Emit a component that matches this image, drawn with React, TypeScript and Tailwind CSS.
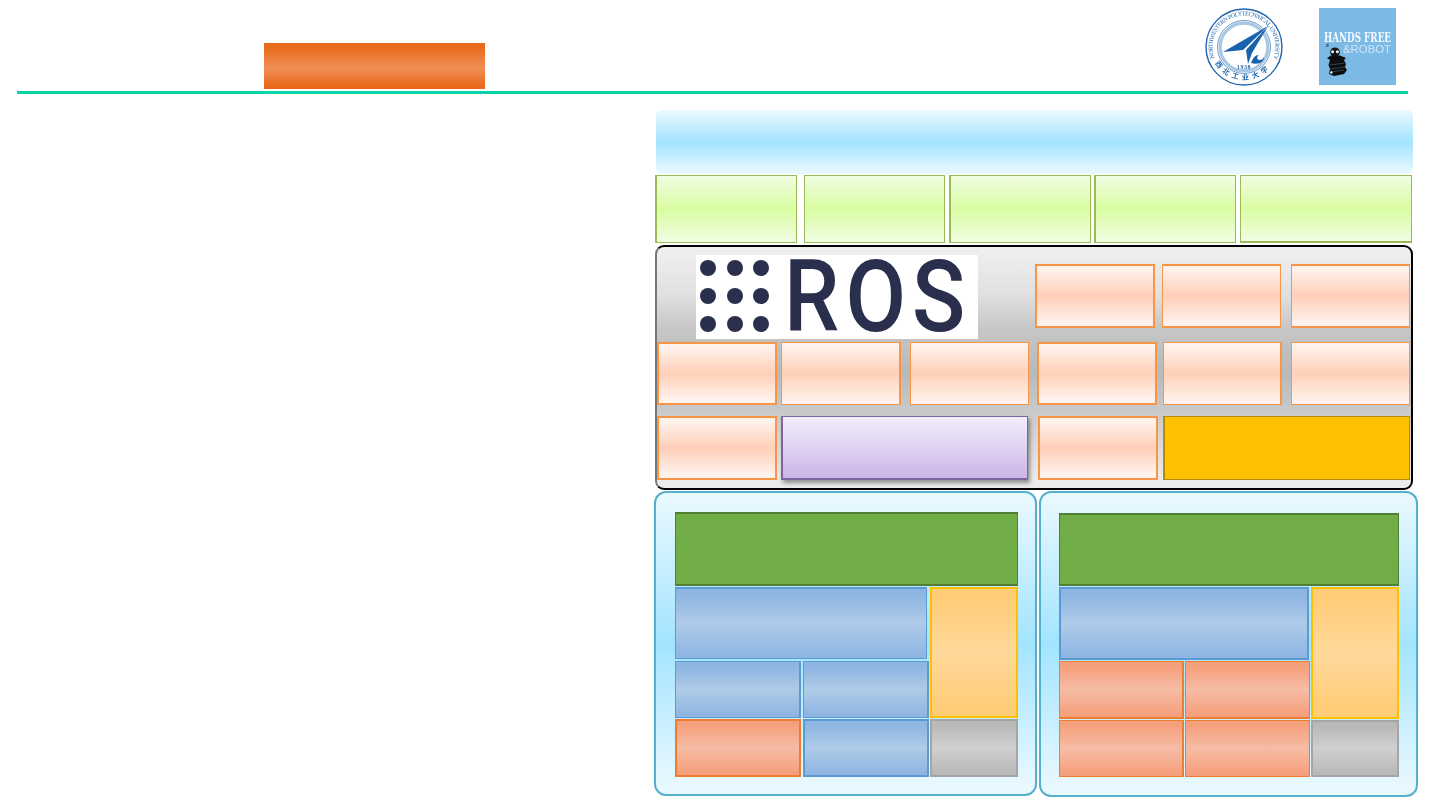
import React from 'react';

const SKY = 'bg-[linear-gradient(180deg,#e8f8ff_2%,#a3e4ff_50%,#e8f8ff_97%)]';
const LIME = 'border-[#9bbb59] bg-[linear-gradient(180deg,#f0fde2_0%,#d9fda2_50%,#f0fde2_100%)]';
const PEACH = 'border-[#f79646] bg-[linear-gradient(180deg,#fff2ec_5%,#ffcfb8_50%,#fff2ec_95%)]';
const BLUE = 'border-[#5b9bd5] bg-[linear-gradient(180deg,#8fb6e2_10%,#b0cbe8_50%,#8fb6e2_95%)]';
const CORAL = 'border-[#ed7d31] bg-[linear-gradient(180deg,#f5a07c_8%,#f6bca5_50%,#f5a07c_95%)]';
const AMBER = 'border-2 border-[#ffc000] bg-[linear-gradient(180deg,#ffcd78_8%,#ffd99b_50%,#ffcd78_92%)]';
const GRAY = 'border-2 border-[#a5a5a5] bg-[linear-gradient(180deg,#b9b9b9_8%,#d0d0d0_50%,#b9b9b9_95%)]';

function Box({ className = '' }: { className?: string }) {
  return <div className={`shrink-0 ${className}`} />;
}

function SchoolSeal() {
  return (
    <svg viewBox="0 0 78 78" className="h-[78px] w-[78px] shrink-0 blur-[0.3px]">
      <defs>
        <path id="sealTop" d="M9.5 50 A31.5 31.5 0 1 1 68.5 50" />
        <path id="sealBottom" d="M6 46 A34 34 0 0 0 72 46" />
      </defs>
      <circle cx="39" cy="39" r="38" fill="#fff" stroke="#1f66ae" strokeWidth="1.4" />
      <circle cx="39" cy="39" r="26.5" fill="#fff" stroke="#2a6fb3" strokeWidth="0.7" />
      <circle cx="39" cy="39" r="23.8" fill="#fff" stroke="#a9c6e2" strokeWidth="3.2" />
      <text fontFamily="'Liberation Serif', serif" fontSize="6" fill="#1f66ae">
        <textPath href="#sealTop" textLength="122">NORTHWESTERN POLYTECHNICAL UNIVERSITY</textPath>
      </text>
      <text fontFamily="'Noto Sans CJK SC', sans-serif" fontSize="7" fontWeight="700" fill="#1f66ae">
        <textPath href="#sealBottom" startOffset="10" textLength="62">西北工业大学</textPath>
      </text>
      <path d="M63 18 L18 44 L38 42 Z" fill="#1a62ab" />
      <path d="M63 18 L41 42 L43 56 L47 45 Z" fill="#1a62ab" />
      <path d="M46 55 C48 50 50 47 54 47 C51 49 52 52 55 52 C57 52 58 51 59 49 C59 54 54 57 46 55 Z" fill="#1a62ab" />
      <text x="39" y="60.5" textAnchor="middle" fontFamily="'Liberation Serif', serif" fontSize="6" fontWeight="700" fill="#1f66ae" letterSpacing="0.6">1938</text>
    </svg>
  );
}

function HandsFreeLogo() {
  return (
    <svg viewBox="0 0 77 77" className="ml-[36px] h-[77px] w-[77px] shrink-0 blur-[0.25px]">
      <rect width="77" height="77" fill="#7db9e5" />
      <text x="5" y="34" textLength="67" lengthAdjust="spacingAndGlyphs" fontFamily="'DejaVu Serif', serif" fontSize="13.5" fontWeight="700" fill="#f4fbff">HANDS FREE</text>
      <text x="24" y="44.5" textLength="48" lengthAdjust="spacingAndGlyphs" fontFamily="'Liberation Sans', sans-serif" fontSize="10.5" fill="#cfe6f5">&amp;ROBOT</text>
      <circle cx="16" cy="44.2" r="4.8" fill="#151515" />
      <circle cx="13.6" cy="43.8" r="1.5" fill="#e8f2f8" />
      <circle cx="18.4" cy="43.8" r="1.5" fill="#e8f2f8" />
      <path d="M8 50 L12 47.5 H21 L27 50 L25 52 H11 Z" fill="#0d0d0d" />
      <path d="M11 52 H25 L27 56 L26 59 L28 62 L25 66 L15 68 L10 66 L11 61 L9.5 57 Z" fill="#0d0d0d" />
      <path d="M11 57 L26 55 M11 61 L26 59 M12 64 L25 62" stroke="#55768f" strokeWidth="0.5" />
      <circle cx="12.3" cy="64.5" r="1.3" fill="#e8f2f8" />
      <path d="M7 37 l2.5 -1 l-2 2.5 l2.5 -0.5" stroke="#28405a" strokeWidth="0.7" fill="none" />
    </svg>
  );
}

function RosLogo() {
  return (
    <div className="ml-[39px] flex h-[84px] w-[282px] shrink-0 items-center bg-white">
      <div className="ml-[4px] grid -translate-y-px grid-cols-[repeat(3,16px)] grid-rows-[repeat(3,16px)] gap-x-[10.5px] gap-y-[11.7px]">
        {Array.from({ length: 9 }).map((_, i) => (
          <span key={i} className="rounded-full bg-[#2b2f4e]" />
        ))}
      </div>
      <span className="ml-[15px] origin-left scale-x-[0.87] font-['Roboto'] text-[101px] leading-[84px] font-medium tracking-[7px] text-[#2b2f4e]">
        ROS
      </span>
    </div>
  );
}

export default function App() {
  return (
    <div className="h-[810px] w-[1440px] overflow-hidden bg-white">
      <header className="ml-[17px] flex h-[94px] w-[1391px] items-start border-b-[3px] border-[#0ad3a5]">
        <Box className="mt-[43px] ml-[247px] h-[46px] w-[221px] bg-[linear-gradient(180deg,#e86c1c_10%,#f18d56_55%,#e86c1c_92%)]" />
        <div className="mt-[8px] ml-[720px] flex">
          <SchoolSeal />
          <HandsFreeLogo />
        </div>
      </header>

      <main className="flex flex-col pl-[654px]">
        <Box className={`mt-[16px] ml-[2px] h-[64px] w-[757px] rounded-[6px] ${SKY}`} />

        <div className="mt-[1px] ml-[1px] flex h-[68px]">
          <Box className={`w-[142px] border border-l-2 ${LIME}`} />
          <Box className={`ml-[7px] w-[141px] border ${LIME}`} />
          <Box className={`ml-[4px] w-[142px] border border-l-2 ${LIME}`} />
          <Box className={`ml-[3px] w-[142px] border border-l-2 ${LIME}`} />
          <Box className={`ml-[4px] w-[172px] border border-b-2 ${LIME}`} />
        </div>

        <section className="mt-[2px] ml-[1px] h-[245px] w-[758px] rounded-[9px] border-2 border-black border-l-[#777] bg-[linear-gradient(180deg,#eeeeee_3%,#e0e0e0_20%,#c6c6c6_34%,#b9b9b9_52%,#c9c9c9_68%,#ebebeb_96%)] pt-[8px]">
          <div className="flex h-[84px] items-start">
            <RosLogo />
            <Box className={`mt-[9px] ml-[57px] h-[64px] w-[120px] border-2 ${PEACH}`} />
            <Box className={`mt-[9px] ml-[7px] h-[64px] w-[119px] border border-y-2 ${PEACH}`} />
            <Box className={`mt-[9px] ml-[10px] h-[64px] w-[119px] border border-y-2 ${PEACH}`} />
          </div>
          <div className="mt-[3px] flex h-[63px]">
            <Box className={`w-[120px] border-2 ${PEACH}`} />
            <Box className={`ml-[4px] w-[120px] border border-r-2 ${PEACH}`} />
            <Box className={`ml-[9px] w-[119px] border ${PEACH}`} />
            <Box className={`ml-[8px] w-[120px] border-2 ${PEACH}`} />
            <Box className={`ml-[6px] w-[119px] border border-r-2 ${PEACH}`} />
            <Box className={`ml-[9px] w-[119px] border ${PEACH}`} />
          </div>
          <div className="mt-[11px] flex h-[64px]">
            <Box className={`w-[120px] border-2 ${PEACH}`} />
            <Box className="ml-[4px] w-[247px] border border-b-2 border-l-2 border-[#8064a2] bg-linear-to-b from-[#f3eefb] to-[#cbb5e6] shadow-[2px_3px_4px_rgba(0,0,0,0.4)]" />
            <Box className={`ml-[10px] w-[120px] border-2 ${PEACH}`} />
            <Box className="ml-[5px] w-[247px] border border-l-2 border-[#b68b06] bg-[#ffc000]" />
          </div>
        </section>

        <div className="mt-[1px] flex">
          <section className={`h-[305px] w-[383px] shrink-0 rounded-[12px] border-2 border-[#55b0cc] pt-[19px] pl-[19px] ${SKY}`}>
            <Box className="h-[74px] w-[343px] border border-y-2 border-[#507e32] bg-[#70ad47]" />
            <div className="mt-[1px] flex">
              <div className="w-[254px] shrink-0">
                <Box className={`h-[72px] w-[252px] border border-t-2 ${BLUE}`} />
                <div className="mt-[2px] flex gap-[2px]">
                  <Box className={`h-[57px] w-[126px] border border-r-2 ${BLUE}`} />
                  <Box className={`h-[57px] w-[126px] border border-r-2 ${BLUE}`} />
                </div>
              </div>
              <Box className={`ml-[1px] h-[131px] w-[88px] ${AMBER}`} />
            </div>
            <div className="mt-[1px] flex">
              <Box className={`h-[58px] w-[126px] border-2 ${CORAL}`} />
              <Box className={`ml-[2px] h-[58px] w-[126px] border-2 ${BLUE}`} />
              <Box className={`ml-[1px] h-[58px] w-[88px] ${GRAY}`} />
            </div>
          </section>

          <section className={`ml-[2px] h-[306px] w-[379px] shrink-0 rounded-[12px] border-2 border-[#55b0cc] pt-[20px] pl-[18px] ${SKY}`}>
            <Box className="h-[73px] w-[340px] border border-y-2 border-[#507e32] bg-[#70ad47]" />
            <div className="mt-[1px] flex">
              <div className="w-[251px] shrink-0">
                <Box className={`h-[73px] w-[250px] border-2 ${BLUE}`} />
                <div className="mt-[1px] flex gap-[1px]">
                  <Box className={`h-[58px] w-[125px] border border-r-2 border-b-2 ${CORAL}`} />
                  <Box className={`h-[58px] w-[125px] border border-b-2 ${CORAL}`} />
                </div>
              </div>
              <Box className={`ml-[1px] h-[132px] w-[88px] ${AMBER}`} />
            </div>
            <div className="mt-[1px] flex">
              <Box className={`h-[57px] w-[125px] border border-r-2 ${CORAL}`} />
              <Box className={`ml-[1px] h-[57px] w-[125px] border ${CORAL}`} />
              <Box className={`ml-[1px] h-[57px] w-[88px] ${GRAY}`} />
            </div>
          </section>
        </div>
      </main>
    </div>
  );
}
